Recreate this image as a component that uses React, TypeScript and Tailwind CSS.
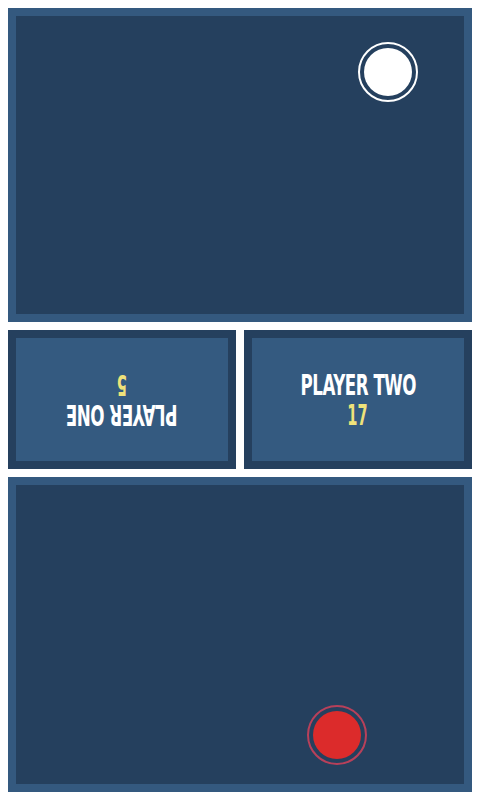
const font = "font-['DejaVu_Sans_Condensed','Liberation_Sans',sans-serif]";

function Puck({ color }: { color: "white" | "red" }) {
  const ring = color === "white" ? "border-white" : "border-[#b8405a]";
  const fill = color === "white" ? "bg-white" : "bg-[#dc2b2b]";
  return (
    <div className={`w-[60px] h-[60px] rounded-full border-2 ${ring} flex items-center justify-center`}>
      <div className={`w-[48px] h-[48px] rounded-full ${fill}`} />
    </div>
  );
}

function Score({ name, score, flipped }: { name: string; score: number; flipped?: boolean }) {
  return (
    <div className="flex-1 border-8 border-[#25405e] bg-[#345a80] flex items-center justify-center">
      <div className={`flex flex-col items-center ${flipped ? "rotate-180" : ""}`}>
        <span className={`${font} font-bold text-[29px] leading-[32px] text-white scale-x-[0.64] whitespace-nowrap tracking-tight`}>
          {name}
        </span>
        <span className={`${font} font-bold text-[28px] leading-[30px] text-[#efe27a] scale-x-[0.58]`}>
          {score}
        </span>
      </div>
    </div>
  );
}

export default function App() {
  return (
    <div className="h-[800px] w-[480px] bg-white p-2 flex flex-col gap-2">
      {/* Player two half */}
      <div className="h-[314px] border-8 border-[#34597f] bg-[#25405e] relative">
        <div className="absolute left-[342px] top-[26px]">
          <Puck color="white" />
        </div>
      </div>

      {/* Scores */}
      <div className="h-[139px] flex gap-2">
        <Score name="PLAYER ONE" score={5} flipped />
        <Score name="PLAYER TWO" score={17} />
      </div>

      {/* Player one half */}
      <div className="flex-1 border-8 border-[#34597f] bg-[#25405e] relative">
        <div className="absolute left-[291px] top-[220px]">
          <Puck color="red" />
        </div>
      </div>
    </div>
  );
}
